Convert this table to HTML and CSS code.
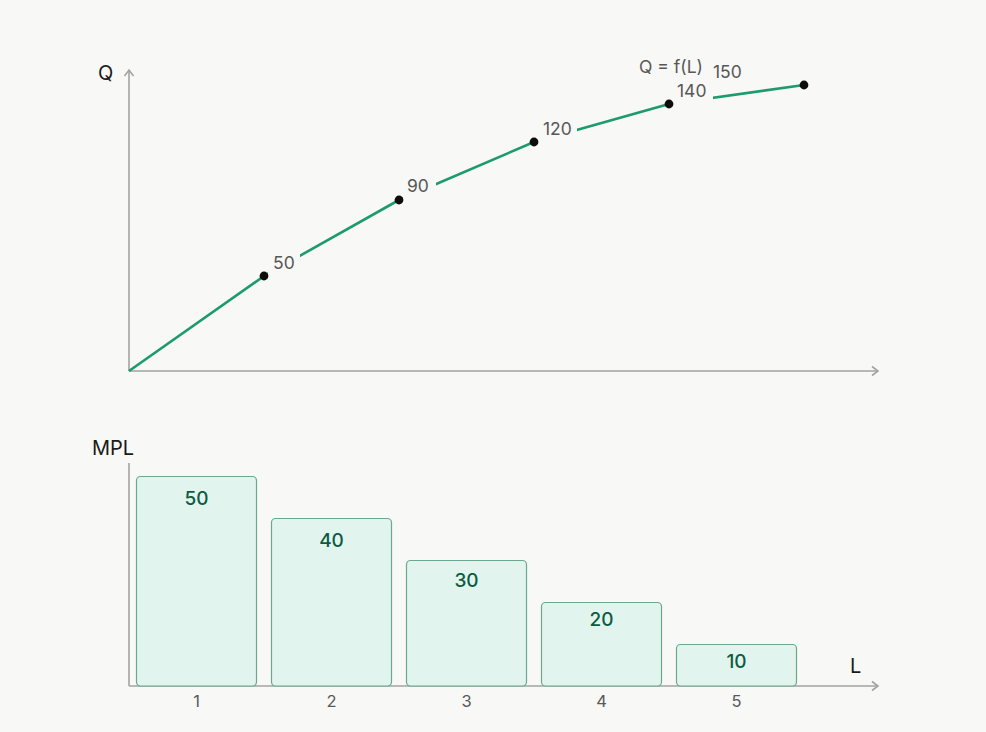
FILE: index.html
```html
<!DOCTYPE html>
<html lang="en">
<head>
<meta charset="utf-8">
<title>Production function and MPL</title>
<link rel="stylesheet" href="styles.css">
</head>
<body>
<main class="page">
<svg class="chart" viewBox="0 0 986 732" width="986" height="732" xmlns="http://www.w3.org/2000/svg">
  <!-- Top chart: total product -->
  <g class="axes">
    <line x1="129" y1="371" x2="129" y2="70"/>
    <polyline points="124.5,76 129,70 133.5,76"/>
    <line x1="129" y1="371" x2="878" y2="371"/>
    <polyline points="872,366.5 878,371 872,375.5"/>
  </g>
  <text class="axis-title" x="98" y="80">Q</text>

  <polyline class="curve" points="129,371 264,276 399,200 534,142 669,104 804,85"/>

  <g class="pt-labels">
    <rect class="mask" x="268" y="248" width="32" height="32"/>
    <text x="273" y="269">50</text>
    <rect class="mask" x="403" y="172" width="33" height="30"/>
    <text x="407" y="192">90</text>
    <rect class="mask" x="538" y="114" width="39" height="32"/>
    <text x="543" y="135">120</text>
    <rect class="mask" x="673" y="78" width="40" height="28"/>
    <text x="677" y="97">140</text>
    <text x="713" y="78">150</text>
    <text x="639" y="73">Q = f(L)</text>
  </g>

  <g class="dots">
    <circle cx="264" cy="276" r="4.4"/>
    <circle cx="399" cy="200" r="4.4"/>
    <circle cx="534" cy="142" r="4.4"/>
    <circle cx="669" cy="104" r="4.4"/>
    <circle cx="804" cy="85" r="4.4"/>
  </g>

  <!-- Bottom chart: marginal product -->
  <g class="axes">
    <line x1="129" y1="686" x2="129" y2="463"/>
    <line x1="129" y1="686" x2="878" y2="686"/>
    <polyline points="872,681.5 878,686 872,690.5"/>
  </g>
  <text class="axis-title" x="92" y="455">MPL</text>
  <text class="axis-title" x="850" y="673">L</text>

  <g class="bars">
    <rect x="136.5" y="476.5" width="120" height="209.5" rx="4"/>
    <rect x="271.5" y="518.5" width="120" height="167.5" rx="4"/>
    <rect x="406.5" y="560.5" width="120" height="125.5" rx="4"/>
    <rect x="541.5" y="602.5" width="120" height="83.5" rx="4"/>
    <rect x="676.5" y="644.5" width="120" height="41.5" rx="4"/>
  </g>
  <g class="bar-values">
    <text x="196.5" y="505">50</text>
    <text x="331.5" y="547">40</text>
    <text x="466.5" y="587">30</text>
    <text x="601.5" y="626">20</text>
    <text x="736.5" y="668">10</text>
  </g>
  <g class="ticks">
    <text x="196.5" y="707">1</text>
    <text x="331.5" y="707">2</text>
    <text x="466.5" y="707">3</text>
    <text x="601.5" y="707">4</text>
    <text x="736.5" y="707">5</text>
  </g>
</svg>
</main>
</body>
</html>
```
FILE: styles.css
```css
html, body {
  margin: 0;
  padding: 0;
  background: #f8f8f6;
}
.page {
  width: 986px;
  height: 732px;
  overflow: hidden;
}
.chart {
  display: block;
  font-family: Inter, "Noto Sans", "Liberation Sans", sans-serif;
}
.axes line,
.axes polyline {
  stroke: #a3a3a0;
  stroke-width: 1.6;
  fill: none;
}
.axis-title {
  font-size: 20px;
  fill: #1a1a1a;
}
.curve {
  fill: none;
  stroke: #1d9b70;
  stroke-width: 2.6;
  stroke-linejoin: round;
}
.mask {
  fill: #f8f8f6;
}
.pt-labels text {
  font-size: 17.5px;
  fill: #575757;
}
.dots circle {
  fill: #0d0d0d;
}
.bars rect {
  fill: #e1f5ee;
  stroke: #6aa88f;
  stroke-width: 1.2;
}
.bar-values text {
  font-size: 19px;
  font-weight: 500;
  fill: #0e5a43;
  text-anchor: middle;
}
.ticks text {
  font-size: 16.5px;
  fill: #595959;
  text-anchor: middle;
}
```
